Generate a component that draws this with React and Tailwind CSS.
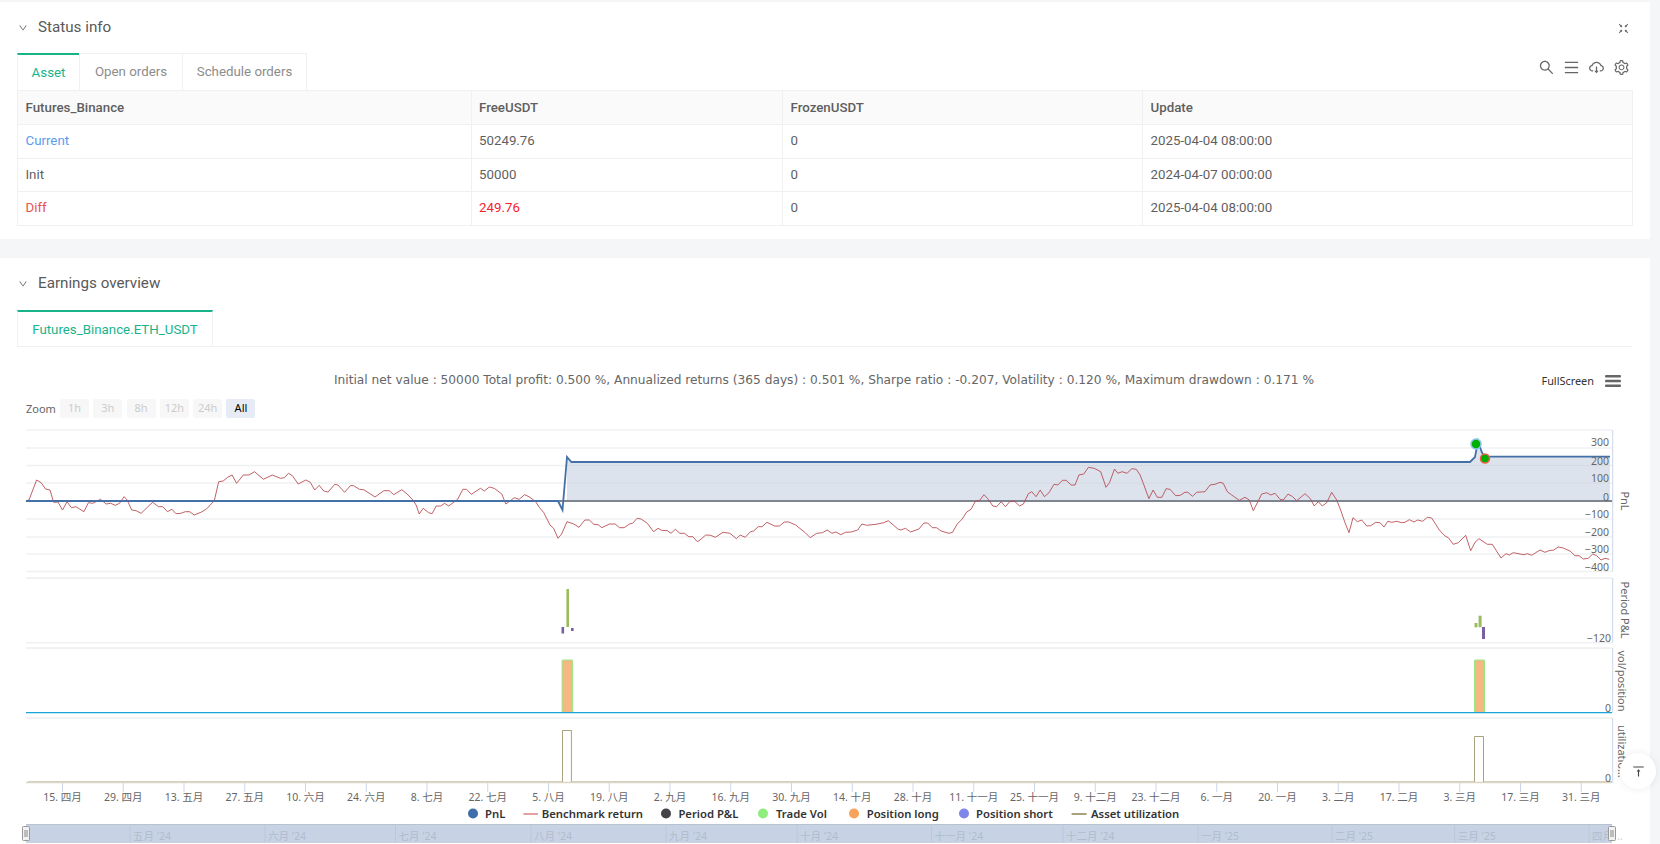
import {
  AiOutlineCloudDownload,
  AiOutlineDown,
  AiOutlineFullscreenExit,
  AiOutlineMenu,
  AiOutlineSearch,
  AiOutlineSetting,
  AiOutlineVerticalAlignTop,
} from 'react-icons/ai'

// benchmark curve, read off the picture in three stretches
const leftPts = [58,242,65,240,82,180,92,188,102,207,112,210,120,247,130,246,140,270,150,245,160,263,170,260,188,275,198,248,208,250,225,238,238,252,248,250,258,256,268,250,278,230,285,240,295,270,305,272,316,280,330,262,342,247,355,260,365,260,375,275,385,268,394,281,405,280,415,275,425,275,435,285,450,277,462,268,480,242,490,185,500,183,510,172,520,165,530,190,545,165,558,165,570,155,590,178,610,165,628,175,637,173,646,160,655,167,668,192,685,180,695,187,705,210,715,196,725,213,735,216,750,193,757,195,772,217,785,197,792,197,805,208,815,209,840,231,860,212,872,212,882,224,900,209,912,222,925,240,932,255,939,282,948,265,960,278,968,281,977,258,987,258,996,250,1005,258,1025,238,1037,208,1045,208,1056,223,1076,205,1085,213,1096,201,1107,205,1124,222,1133,252,1152,233,1163,238,1175,224,1185,230,1200,245,1208,262,1218,278,1232,315,1240,325,1250,355,1258,342,1270,305,1285,312,1297,322,1310,300,1320,300,1330,313,1340,314,1348,323,1365,312,1378,312,1388,323,1398,323,1410,312,1417,310,1427,295,1436,297,1450,310,1464,335,1474,325,1482,331,1495,332,1503,340,1513,328,1523,340,1533,340,1543,350,1552,350,1562,365]
const midPts = [0,360,15,345,28,346,40,352,60,337,78,340,95,356,105,345,118,352,132,335,140,333,152,320,162,320,175,307,195,318,208,318,220,306,232,306,250,315,275,338,288,353,305,340,320,338,332,330,345,340,355,336,368,344,380,337,395,336,412,330,423,312,435,316,460,313,480,308,492,302,505,315,518,328,525,330,537,325,550,336,572,327,585,309,595,309,607,323,618,323,630,333,650,340,660,337,672,312,685,297,697,276,708,268,720,243,730,242,742,224,752,236,765,258,775,260,787,245,798,260,810,244,822,244,835,258,845,252,858,221,867,215,878,230,889,210,900,230,912,218,925,193,935,195,947,181,957,181,970,195,980,195,990,165,1003,162,1015,142,1030,145,1047,155,1061,202,1070,188,1083,147,1092,160,1103,155,1116,160,1128,146,1140,148,1150,165,1160,195,1173,236,1184,210,1195,232,1207,232,1218,206,1228,208,1243,227,1255,226,1267,217,1275,217,1287,229,1298,217]
const rightPts = [15,425,30,405,45,403,60,397,70,400,82,425,95,435,118,451,135,442,148,450,160,482,185,432,200,428,212,435,225,430,240,448,250,450,264,432,278,440,290,452,315,431,330,445,343,468,355,455,367,468,380,458,395,427,410,450,420,475,435,518,447,548,459,503,472,515,485,510,500,528,512,527,527,517,540,518,552,531,563,514,575,517,590,514,605,518,615,517,628,509,642,516,653,510,668,514,682,502,695,504,718,540,735,558,745,563,760,583,775,578,797,556,812,602,825,577,837,566,862,583,877,583,903,624,918,611,928,615,940,608,960,612,972,614,982,611,995,616,1020,600,1035,607,1050,601,1060,601,1075,591,1090,594,1110,603,1125,617,1137,617,1150,627,1165,625,1178,612,1190,617,1203,630,1215,625,1228,628]

function toPoints(list, scaleX, offX, offY) {
  const out = []
  for (let i = 0; i < list.length; i += 2) {
    out.push(`${(list[i] / scaleX + offX).toFixed(1)},${(list[i + 1] / 3 + offY).toFixed(1)}`)
  }
  return out
}

const benchmark = [
  ...toPoints(leftPts, 2.24, 0, 420),
  ...toPoints(midPts, 2.613, 700, 420),
  ...toPoints(rightPts, 3, 1200, 350),
].join(' ')

const xLabels = ['15. 四月','29. 四月','13. 五月','27. 五月','10. 六月','24. 六月','8. 七月','22. 七月','5. 八月','19. 八月','2. 九月','16. 九月','30. 九月','14. 十月','28. 十月','11. 十一月','25. 十一月','9. 十二月','23. 十二月','6. 一月','20. 一月','3. 二月','17. 二月','3. 三月','17. 三月','31. 三月']

const navLabels = [
  ['五月 \'24', 130], ['六月 \'24', 265], ['七月 \'24', 395.5], ['八月 \'24', 531], ['九月 \'24', 666],
  ['十月 \'24', 797], ['十一月 \'24', 931.6], ['十二月 \'24', 1063], ['一月 \'25', 1198], ['二月 \'25', 1332],
  ['三月 \'25', 1454.7], ['四月', 1589],
]

const gridY = [430, 448, 465.5, 483, 519, 537, 554, 571.5]
const pnlTicks = [['300', 446], ['200', 464.5], ['100', 482], ['0', 501], ['−100', 518], ['−200', 536], ['−300', 553], ['−400', 571]]

const rows = [
  { name: 'Current', free: '50249.76', frozen: '0', update: '2025-04-04 08:00:00', nameClass: 'text-[#5b9bf0]', freeClass: '' },
  { name: 'Init', free: '50000', frozen: '0', update: '2024-04-07 00:00:00', nameClass: '', freeClass: '' },
  { name: 'Diff', free: '249.76', frozen: '0', update: '2025-04-04 08:00:00', nameClass: 'text-[#e8534f]', freeClass: 'text-[#f5222d]' },
]

function SectionTitle({ children }) {
  return (
    <div className="flex items-center gap-[10px] text-[#595959]">
      <AiOutlineDown className="ml-[1px] h-[10px] w-[10px]" />
      <span className="text-[15.2px] leading-none">{children}</span>
    </div>
  )
}

function ChartSvg() {
  return (
    <svg width="1650" height="418" viewBox="0 426 1650 418" className="block font-['Noto_Sans','Noto_Sans_CJK_SC',sans-serif]">
      {/* pnl panel */}
      {gridY.map((y) => (
        <line key={y} x1="26" x2="1612" y1={y} y2={y} stroke="#eff0f2" strokeWidth="1.5" />
      ))}
      <polygon points="567,501 567,457 571.4,462 1470,462 1475,457 1478,441 1481.7,452 1485,458 1490,456.7 1610,456.7 1610,501" fill="#dde3ed" />
      <line x1="567" x2="1610" y1="465.5" y2="465.5" stroke="#d5dbe4" />
      <line x1="567" x2="1610" y1="483" y2="483" stroke="#d5dbe4" />
      <line x1="558" x2="1612" y1="501" y2="501" stroke="#7e8591" strokeWidth="2" />
      <polyline points={benchmark} fill="none" stroke="#b5474c" strokeWidth="1" strokeOpacity="0.85" />
      <polyline points="26,501 558,501 562.5,510 567,457 571.4,462 1470,462 1475,457 1478,441 1481.7,452 1485,458 1490,456.7 1610,456.7" fill="none" stroke="#4470a8" strokeWidth="1.8" />
      <circle cx="1476" cy="444" r="5" fill="#00b000" stroke="#8cc4ea" strokeWidth="1.5" />
      <circle cx="1485" cy="458.5" r="4.5" fill="#00b000" stroke="#f0604a" strokeWidth="1.5" />
      <line x1="1612.7" x2="1612.7" y1="430" y2="571.5" stroke="#ccd6eb" />
      {pnlTicks.map(([t, y]) => (
        <text key={t} x="1609" y={y} textAnchor="end" fontSize="10.5" fill="#666666">{t}</text>
      ))}

      {/* period p&l */}
      <line x1="26" x2="1612" y1="578" y2="578" stroke="#e6e6e6" />
      <line x1="26" x2="1612" y1="642.7" y2="642.7" stroke="#eff0f2" strokeWidth="1.5" />
      <rect x="566.4" y="589" width="2.6" height="38" fill="#9bbb5f" />
      <rect x="561.5" y="627" width="2.6" height="6.5" fill="#7b5fa3" />
      <rect x="571" y="628" width="2.6" height="3" fill="#7b5fa3" />
      <rect x="1474.5" y="623" width="3" height="4.3" fill="#9bbb5f" />
      <rect x="1478.6" y="615.7" width="3" height="11.5" fill="#9bbb5f" />
      <rect x="1482" y="627" width="3" height="12" fill="#7b5fa3" />
      <line x1="1612.7" x2="1612.7" y1="578" y2="642.7" stroke="#ccd6eb" />
      <text x="1611" y="641.5" textAnchor="end" fontSize="10.5" fill="#666666">−120</text>

      {/* vol/position */}
      <line x1="26" x2="1612" y1="648" y2="648" stroke="#e6e6e6" />
      {[561.6, 1474].map((x, i) => (
        <rect key={x} x={x + 0.5} y="660" width={i === 0 ? 10.5 : 10} height="52.5" rx="1" fill="#f6b882" stroke="#98e884" />
      ))}
      <line x1="26" x2="1612" y1="712.7" y2="712.7" stroke="#1aa5da" strokeWidth="1.2" />
      <line x1="1612.7" x2="1612.7" y1="648" y2="712.7" stroke="#ccd6eb" />
      <text x="1611" y="711.5" textAnchor="end" fontSize="10.5" fill="#666666">0</text>

      {/* asset utilization */}
      <line x1="26" x2="1612" y1="718" y2="718" stroke="#e6e6e6" />
      <polyline points="28,782 562.5,782 562.5,730.5 571.4,730.5 571.4,782 1474.5,782 1474.5,736.5 1483.5,736.5 1483.5,782 1612,782" fill="none" stroke="#8c8350" strokeOpacity="0.75" strokeWidth="1" />
      <line x1="26" x2="1612" y1="782.5" y2="782.5" stroke="#d9d6c4" strokeWidth="1.5" />
      <line x1="1612.7" x2="1612.7" y1="718" y2="783" stroke="#ccd6eb" />
      <text x="1611" y="781.5" textAnchor="end" fontSize="10.5" fill="#666666">0</text>

      {/* y axis titles */}
      <text transform="translate(1621,501) rotate(90)" textAnchor="middle" fontSize="11" fill="#666666">PnL</text>
      <text transform="translate(1621,610) rotate(90)" textAnchor="middle" fontSize="11" fill="#666666">Period P&amp;L</text>
      <text transform="translate(1617.5,681) rotate(90)" textAnchor="middle" fontSize="11" fill="#666666">vol/position</text>
      <text transform="translate(1617.5,725) rotate(90)" fontSize="11" fill="#666666">utilizatio…</text>

      {/* x axis */}
      {xLabels.map((t, i) => {
        const x = 62.5 + i * 60.75
        return (
          <g key={t}>
            <line x1={x} x2={x} y1="783" y2="792" stroke="#ccd6eb" />
            <text x={x} y="801" textAnchor="middle" fontSize="10.5" fill="#666666">{t}</text>
          </g>
        )
      })}

      {/* legend */}
      <g fontSize="11.3" fontWeight="600" fill="#333333">
        <circle cx="473" cy="813.5" r="5" fill="#3f6ea8" />
        <text x="485" y="817.5">PnL</text>
        <line x1="523.4" x2="538" y1="814" y2="814" stroke="#d98286" strokeWidth="1.5" />
        <text x="541.8" y="817.5">Benchmark return</text>
        <circle cx="666" cy="813.5" r="5" fill="#434348" />
        <text x="678.4" y="817.5">Period P&amp;L</text>
        <circle cx="763" cy="813.5" r="5" fill="#90ed7d" />
        <text x="776" y="817.5">Trade Vol</text>
        <circle cx="854" cy="813.5" r="5" fill="#f7a35c" />
        <text x="866.7" y="817.5">Position long</text>
        <circle cx="964" cy="813.5" r="5" fill="#8085e9" />
        <text x="976" y="817.5">Position short</text>
        <line x1="1071.6" x2="1086.6" y1="814" y2="814" stroke="#8c8350" strokeWidth="1.5" />
        <text x="1091" y="817.5">Asset utilization</text>
      </g>

      {/* navigator */}
      <rect x="26" y="824" width="1586" height="19" fill="#c7d3e4" />
      <line x1="26" x2="1612" y1="824.5" y2="824.5" stroke="#b9c2cf" />
      {navLabels.map(([t, x]) => (
        <g key={t}>
          <line x1={x} x2={x} y1="824" y2="843" stroke="#bcc8da" />
          <text x={x + 3} y="840" fontSize="10.5" fill="#b0bccd">{t}</text>
        </g>
      ))}
      <text x="1617" y="840" fontSize="10.5" fill="#cccccc">..</text>
      {[22, 1608].map((x) => (
        <g key={x}>
          <rect x={x + 0.5} y="826.5" width="7" height="14" rx="1" fill="#f2f2f2" stroke="#999999" />
          <line x1={x + 3} x2={x + 3} y1="830" y2="837" stroke="#888888" />
          <line x1={x + 5} x2={x + 5} y1="830" y2="837" stroke="#888888" />
        </g>
      ))}
    </svg>
  )
}

export default function App() {
  return (
    <div className="relative h-[844px] overflow-hidden bg-[#f5f6f8] pt-[2px] pr-[10px] font-['Roboto',sans-serif] text-[#5f5f5f]">
      <section className="h-[237px] bg-white px-[17px]">
        <div className="flex h-[51px] items-center justify-between pt-[1px] pr-[2px]">
          <SectionTitle>Status info</SectionTitle>
          <AiOutlineFullscreenExit className="mr-[1px] h-[13px] w-[13px] text-[#666666]" />
        </div>
        <div className="flex h-[37px] w-[1615px] items-start justify-between">
          <div className="flex h-[37px] border-r border-[#f0f0f0] text-[13.3px]">
            <div className="flex w-[62px] items-center justify-center border-t-2 border-l border-[#19b38a] border-l-[#f0f0f0] text-[#19b38a]">Asset</div>
            <div className="flex w-[103px] items-center justify-center border-t border-l border-[#f0f0f0] text-[#8c8c8c]">Open orders</div>
            <div className="flex w-[124px] items-center justify-center border-t border-l border-[#f0f0f0] text-[#8c8c8c]">Schedule orders</div>
          </div>
          <div className="mt-[6px] mr-[2px] flex items-center gap-[8px] text-[#666666]">
            <AiOutlineSearch className="h-[17px] w-[17px]" />
            <AiOutlineMenu className="h-[17px] w-[17px]" />
            <AiOutlineCloudDownload className="h-[17px] w-[17px]" />
            <AiOutlineSetting className="h-[17px] w-[17px]" />
          </div>
        </div>
        <table className="w-[1615px] table-fixed border-collapse text-[13.3px]">
          <colgroup>
            <col className="w-[453.5px]" />
            <col className="w-[311.5px]" />
            <col className="w-[360px]" />
            <col className="w-[490px]" />
          </colgroup>
          <thead>
            <tr className="h-[34px] bg-[#fafafa] text-left">
              {['Futures_Binance', 'FreeUSDT', 'FrozenUSDT', 'Update'].map((h) => (
                <th key={h} className="border border-[#f0f0f0] px-[7.5px] font-medium">{h}</th>
              ))}
            </tr>
          </thead>
          <tbody>
            {rows.map((r) => (
              <tr key={r.name} className="h-[33.5px]">
                <td className={`border border-[#f0f0f0] px-[7.5px] ${r.nameClass}`}>{r.name}</td>
                <td className={`border border-[#f0f0f0] px-[7.5px] ${r.freeClass}`}>{r.free}</td>
                <td className="border border-[#f0f0f0] px-[7.5px]">{r.frozen}</td>
                <td className="border border-[#f0f0f0] px-[7.5px]">{r.update}</td>
              </tr>
            ))}
          </tbody>
        </table>
      </section>

      <section className="mt-[19px] bg-white">
        <div className="flex h-[52px] items-center px-[17px]">
          <SectionTitle>Earnings overview</SectionTitle>
        </div>
        <div className="mx-[17px] h-[37px] w-[1615px] border-b border-[#f0f0f0]">
          <div className="flex h-[37px] w-[196px] items-center justify-center border-x border-t-2 border-[#f0f0f0] border-t-[#19b38a] text-[13.3px] text-[#19b38a]">
            Futures_Binance.ETH_USDT
          </div>
        </div>
        <div>
          <div className="relative flex h-[42px] items-center justify-center pt-[25px] pr-[2px] font-['DejaVu_Sans',sans-serif] text-[12.2px] text-[#666666]">
            Initial net value : 50000 Total profit: 0.500 %, Annualized returns (365 days) : 0.501 %, Sharpe ratio : -0.207, Volatility : 0.120 %, Maximum drawdown : 0.171 %
            <div className="absolute top-[26px] right-[29px] flex items-center gap-[11px] font-['Noto_Sans',sans-serif] text-[10.9px] text-[#333333]">
              <span>FullScreen</span>
              <svg width="16" height="12" viewBox="0 0 16 12" className="block">
                <rect x="0" y="0" width="16" height="2.6" rx="1" fill="#666666" />
                <rect x="0" y="4.7" width="16" height="2.6" rx="1" fill="#666666" />
                <rect x="0" y="9.4" width="16" height="2.6" rx="1" fill="#666666" />
              </svg>
            </div>
          </div>
          <div className="flex h-[37px] items-start gap-[4.3px] pt-[10px] pl-[26px] font-['Noto_Sans',sans-serif] text-[11px] text-[#666666]">
            <span className="w-[29.7px] leading-[19px]">Zoom</span>
            {['1h', '3h', '8h', '12h', '24h'].map((z) => (
              <span key={z} className="flex h-[19px] w-[29px] items-center justify-center rounded-[2px] bg-[#f7f7f7] text-[#cccccc]">{z}</span>
            ))}
            <span className="flex h-[19px] w-[29px] items-center justify-center rounded-[2px] bg-[#e6ebf5] text-black">All</span>
          </div>
        </div>
        <ChartSvg />
      </section>

      <div className="absolute top-[753px] left-[1620px] flex h-[36px] w-[36px] items-center justify-center rounded-full bg-white shadow-[0_0_8px_rgba(0,0,0,0.08)]">
        <AiOutlineVerticalAlignTop className="h-[15px] w-[15px] text-[#444444]" />
      </div>
    </div>
  )
}
